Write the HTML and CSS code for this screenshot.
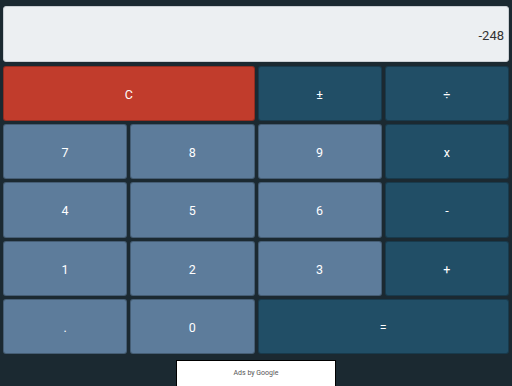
FILE: index.html
```html
<!DOCTYPE html>
<html>
<head>
<meta charset="utf-8">
<link rel="stylesheet" href="styles.css">
</head>
<body>
<div class="calc">
  <div class="display">-248</div>
  <div class="keys">
    <button class="key clear wide">C</button>
    <button class="key op">±</button>
    <button class="key op">÷</button>
    <button class="key num">7</button>
    <button class="key num">8</button>
    <button class="key num">9</button>
    <button class="key op">x</button>
    <button class="key num">4</button>
    <button class="key num">5</button>
    <button class="key num">6</button>
    <button class="key op">-</button>
    <button class="key num">1</button>
    <button class="key num">2</button>
    <button class="key num">3</button>
    <button class="key op">+</button>
    <button class="key num">.</button>
    <button class="key num">0</button>
    <button class="key op wide">=</button>
  </div>
  <div class="ad-row">
    <div class="ad"><span class="ad-text">Ads by Google</span></div>
  </div>
</div>
</body>
</html>
```
FILE: styles.css
```css
html, body {
  margin: 0;
  padding: 0;
  height: 100%;
  overflow: hidden;
}
body {
  background: #1b2931;
  font-family: Roboto, "Liberation Sans", sans-serif;
}
.calc {
  padding: 6px 3px 0 3px;
  display: flex;
  flex-direction: column;
}
.display {
  height: 56px;
  box-sizing: border-box;
  background: #eceff2;
  border-radius: 3px;
  border: 1px solid #c9ced3;
  color: #333;
  font-size: 13px;
  display: flex;
  align-items: center;
  justify-content: flex-end;
  padding: 2px 4px 0 0;
  margin-bottom: 4px;
}
.keys {
  display: grid;
  grid-template-columns: repeat(4, 1fr);
  grid-auto-rows: 55.2px;
  gap: 3px;
}
.key {
  border: 1px solid rgba(0,0,0,0.25);
  border-radius: 3px;
  color: #fff;
  font-family: Roboto, "Liberation Sans", sans-serif;
  font-size: 12.5px;
  padding: 2px 0 0 0;
  margin: 0;
}
.wide {
  grid-column: span 2;
}
.num {
  background: #5d7c9b;
}
.op {
  background: #214e66;
}
.clear {
  background: #c13c2c;
}
.ad-row {
  display: flex;
  justify-content: center;
  margin-top: 6px;
}
.ad {
  width: 160px;
  height: 30px;
  box-sizing: border-box;
  background: #fff;
  border: 1px solid #000;
  display: flex;
  align-items: center;
  justify-content: center;
  padding-bottom: 4px;
}
.ad-text {
  font-size: 7px;
  color: #555;
}
```
